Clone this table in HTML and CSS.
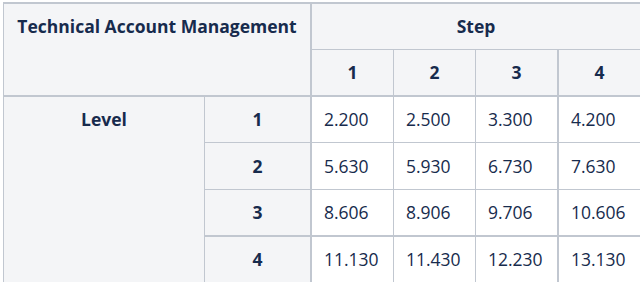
FILE: index.html
```html
<!DOCTYPE html>
<html lang="en">
<head>
<meta charset="utf-8">
<title>Technical Account Management</title>
<link rel="stylesheet" href="styles.css">
</head>
<body>
<table class="grid">
  <colgroup>
    <col class="c-level">
    <col class="c-num">
    <col class="c-step">
    <col class="c-step">
    <col class="c-step3">
    <col class="c-step">
  </colgroup>
  <thead>
    <tr>
      <th class="hd corner" colspan="2" rowspan="2">Technical Account Management</th>
      <th class="hd" colspan="4">Step</th>
    </tr>
    <tr class="steps">
      <th class="hd">1</th>
      <th class="hd">2</th>
      <th class="hd thick-r">3</th>
      <th class="hd">4</th>
    </tr>
  </thead>
  <tbody>
    <tr>
      <th class="hd level" rowspan="4">Level</th>
      <th class="hd thick-r">1</th>
      <td>2.200</td><td>2.500</td><td class="thick-r">3.300</td><td>4.200</td>
    </tr>
    <tr class="tall">
      <th class="hd thick-r">2</th>
      <td>5.630</td><td>5.930</td><td class="thick-r">6.730</td><td>7.630</td>
    </tr>
    <tr class="thick-b">
      <th class="hd thick-r">3</th>
      <td>8.606</td><td>8.906</td><td class="thick-r">9.706</td><td>10.606</td>
    </tr>
    <tr>
      <th class="hd thick-r">4</th>
      <td>11.130</td><td>11.430</td><td class="thick-r">12.230</td><td>13.130</td>
    </tr>
  </tbody>
</table>
</body>
</html>
```
FILE: styles.css
```css
html, body {
  margin: 0;
  padding: 0;
  background: #ffffff;
  overflow: hidden;
}

body {
  padding: 2px 0 0 3px;
  font-family: "Open Sans", "Noto Sans", sans-serif;
  font-size: 17.5px;
  color: #172b4d;
}

.grid {
  border-collapse: separate;
  border-spacing: 0;
  table-layout: fixed;
  width: 638px;
  border-top: 2px solid #c1c7d0;
  border-left: 1px solid #c1c7d0;
}

.c-level { width: 201px; }
.c-num { width: 107px; }
.c-step { width: 82px; }
.c-step3 { width: 83px; }

.grid th,
.grid td {
  padding: 8px 12px;
  line-height: 29px;
  border-right: 1px solid #c1c7d0;
  border-bottom: 1px solid #c1c7d0;
  vertical-align: top;
  white-space: nowrap;
}

.grid .tall th,
.grid .tall td {
  line-height: 30px;
}

.grid td {
  background: #ffffff;
  text-align: left;
  font-weight: 400;
}

.hd {
  background: #f4f5f7;
  font-weight: 700;
  text-align: center;
}

.corner {
  border-right-width: 2px !important;
  border-bottom-width: 2px !important;
}

.steps th {
  border-bottom-width: 2px;
}

.thick-r {
  border-right-width: 2px !important;
}

.thick-b td,
.thick-b th {
  border-bottom-width: 2px;
}
```
